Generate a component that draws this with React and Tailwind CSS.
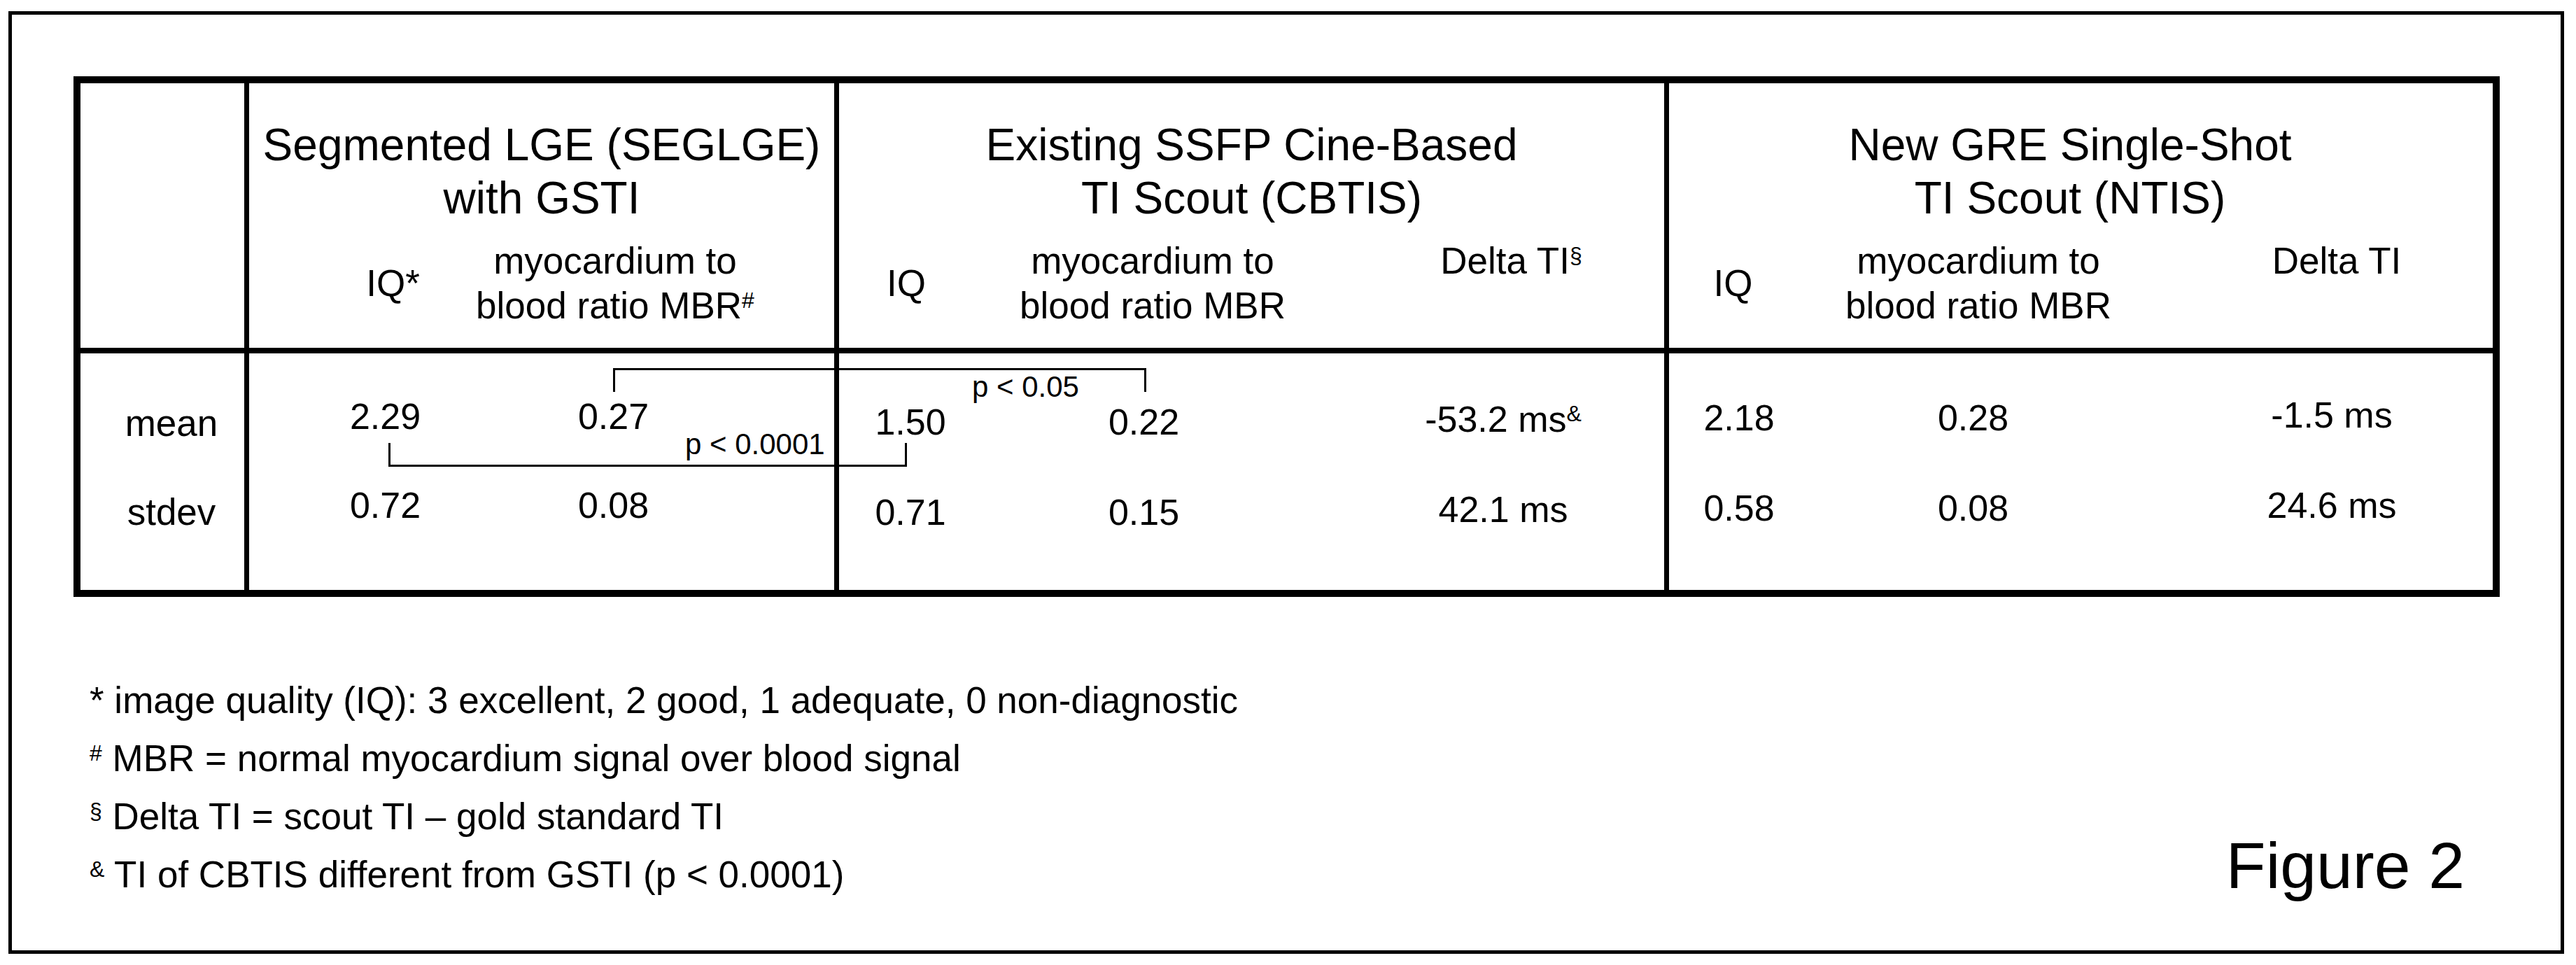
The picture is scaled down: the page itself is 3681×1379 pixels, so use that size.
import React from 'react';

const FONT = "font-['Liberation_Sans',Arial,Helvetica,sans-serif]";

function Sup({ children }) {
  return <span className="text-[32px] leading-none align-[15px]">{children}</span>;
}

// one centred slot inside a sub-column grid track
function Slot({ children, className = '' }) {
  return (
    <div className={`flex justify-center min-w-0 ${className}`}>
      <div className="w-max shrink-0 whitespace-nowrap text-center">{children}</div>
    </div>
  );
}

function MbrLabel({ mark }) {
  return (
    <>
      <div>myocardium to</div>
      <div>
        blood ratio MBR{mark ? <Sup>{mark}</Sup> : null}
      </div>
    </>
  );
}

function Title({ lines, className = '' }) {
  return (
    <div className={`pt-[50px] text-center text-[64px] leading-[76px] whitespace-nowrap ${className}`}>
      {lines.map((l) => (
        <div key={l}>{l}</div>
      ))}
    </div>
  );
}

export default function App() {
  return (
    <div className={`w-[3681px] h-[1379px] bg-white text-black pt-[16px] pl-[12px] ${FONT}`}>
      <div className="w-[3652px] h-[1347px] border-[5px] border-black flex flex-col">
        {/* table */}
        <div className="relative ml-[88px] mt-[88px] w-[3467px] h-[744px] border-[10px] border-black flex flex-col">
          {/* header row */}
          <div className="flex h-[386px] border-b-[8px] border-black">
            <div className="w-[241px] shrink-0 border-r-[7px] border-black" />

            <div className="w-[843px] shrink-0 border-r-[7px] border-black">
              <Title lines={['Segmented LGE (SEGLGE)', 'with GSTI']} />
              <div className="mt-[20px] grid grid-cols-[411px_224px] text-[53px] leading-[64px]">
                <Slot className="self-center">IQ*</Slot>
                <Slot>
                  <MbrLabel mark="#" />
                </Slot>
              </div>
            </div>

            <div className="w-[1186px] shrink-0 border-r-[7px] border-black">
              <Title lines={['Existing SSFP Cine-Based', 'TI Scout (CBTIS)']} />
              <div className="mt-[20px] grid grid-cols-[192px_512px_513px] text-[53px] leading-[64px]">
                <Slot className="self-center">IQ</Slot>
                <Slot>
                  <MbrLabel />
                </Slot>
                <Slot className="self-start">
                  Delta TI<Sup>§</Sup>
                </Slot>
              </div>
            </div>

            <div className="flex-1 min-w-0">
              <Title lines={['New GRE Single-Shot', 'TI Scout (NTIS)']} className="pr-[31px]" />
              <div className="mt-[20px] grid grid-cols-[183px_518px_506px] text-[53px] leading-[64px]">
                <Slot className="self-center">IQ</Slot>
                <Slot>
                  <MbrLabel />
                </Slot>
                <Slot className="self-start">Delta TI</Slot>
              </div>
            </div>
          </div>

          {/* body row */}
          <div className="flex h-[338px]">
            <div className="w-[241px] shrink-0 border-r-[7px] border-black flex flex-col items-center pl-[26px] pt-[68px] gap-[63px] text-[53px] leading-[64px]">
              <div>mean</div>
              <div>stdev</div>
            </div>

            <div className="w-[843px] shrink-0 border-r-[7px] border-black flex flex-col pt-[58px] gap-[63px] text-[52px] leading-[64px]">
              <div className="grid grid-cols-[389px_263px]">
                <Slot>2.29</Slot>
                <Slot>0.27</Slot>
              </div>
              <div className="grid grid-cols-[389px_263px]">
                <Slot>0.72</Slot>
                <Slot>0.08</Slot>
              </div>
            </div>

            <div className="w-[1186px] shrink-0 border-r-[7px] border-black flex flex-col pt-[66px] gap-[65px] text-[52px] leading-[64px]">
              <div className="grid grid-cols-[204px_463px_564px] items-start">
                <Slot>1.50</Slot>
                <Slot>0.22</Slot>
                <Slot className="-mt-[4px]">
                  -53.2 ms<Sup>&amp;</Sup>
                </Slot>
              </div>
              <div className="grid grid-cols-[204px_463px_564px] items-start">
                <Slot>0.71</Slot>
                <Slot>0.15</Slot>
                <Slot className="-mt-[4px]">42.1 ms</Slot>
              </div>
            </div>

            <div className="flex-1 min-w-0 flex flex-col pt-[60px] gap-[65px] text-[52px] leading-[64px]">
              <div className="grid grid-cols-[200px_469px_556px] items-start">
                <Slot>2.18</Slot>
                <Slot>0.28</Slot>
                <Slot className="-mt-[4px]">-1.5 ms</Slot>
              </div>
              <div className="grid grid-cols-[200px_469px_556px] items-start">
                <Slot>0.58</Slot>
                <Slot>0.08</Slot>
                <Slot className="-mt-[4px]">24.6 ms</Slot>
              </div>
            </div>
          </div>

          {/* significance brackets over the cells */}
          <div className="absolute left-[761px] top-[407px] w-[762px] h-[34px] border-t-[3px] border-x-[3px] border-black" />
          <div className="absolute left-[440px] top-[514px] w-[741px] h-[34px] border-b-[3px] border-x-[3px] border-black" />
          <span className="absolute left-[1274px] top-[413px] text-[42px] leading-[42px] whitespace-nowrap">
            p &lt; 0.05
          </span>
          <span className="absolute left-[864px] top-[495px] text-[42px] leading-[42px] whitespace-nowrap">
            p &lt; 0.0001
          </span>
        </div>

        {/* footnotes + figure label */}
        <div className="mt-[106px] pl-[111px] pr-[137px] flex items-end justify-between">
          <div className="text-[53px] leading-[83px] whitespace-nowrap">
            <div>* image quality (IQ): 3 excellent, 2 good, 1 adequate, 0 non-diagnostic</div>
            <div>
              <Sup>#</Sup> MBR = normal myocardium signal over blood signal
            </div>
            <div>
              <Sup>§</Sup> Delta TI = scout TI – gold standard TI
            </div>
            <div>
              <Sup>&amp;</Sup> TI of CBTIS different from GSTI (p &lt; 0.0001)
            </div>
          </div>
          <div className="text-[93px] leading-[108px] whitespace-nowrap">Figure 2</div>
        </div>
      </div>
    </div>
  );
}
